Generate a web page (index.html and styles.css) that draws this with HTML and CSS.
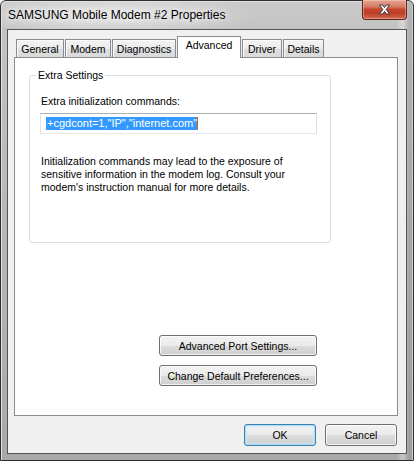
FILE: index.html
```html
<!DOCTYPE html>
<html>
<head>
<meta charset="utf-8">
<title>SAMSUNG Mobile Modem #2 Properties</title>
<link rel="stylesheet" href="styles.css">
</head>
<body>
<div class="window">
  <div class="titlebar">
    <span class="title">SAMSUNG Mobile Modem #2 Properties</span>
    <button class="close" aria-label="Close">
      <svg width="13" height="11" viewBox="0 0 13 11">
        <path d="M1.5 1 H4.5 L6.5 3.6 L8.5 1 H11.5 L8.2 5.5 L11.5 10 H8.5 L6.5 7.4 L4.5 10 H1.5 L4.8 5.5 Z" fill="#fff" stroke="#3a3a3a" stroke-width="1" stroke-linejoin="round"/>
      </svg>
    </button>
  </div>
  <div class="client">
    <div class="tabs">
      <div class="tab w-general">General</div>
      <div class="tab w-modem">Modem</div>
      <div class="tab w-diag">Diagnostics</div>
      <div class="tab tab-active w-adv">Advanced</div>
      <div class="tab w-driver">Driver</div>
      <div class="tab w-details">Details</div>
    </div>
    <div class="panel">
      <fieldset class="group">
        <legend class="group-title">Extra Settings</legend>
        <div class="label">Extra initialization commands:</div>
        <div class="textbox"><span class="sel">+cgdcont=1,"IP","internet.com"</span><span class="caret"></span></div>
        <p class="note">Initialization commands may lead to the exposure of<br>sensitive information in the modem log. Consult your<br>modem's instruction manual for more details.</p>
      </fieldset>
      <div class="panel-buttons">
        <button class="btn btn-wide">Advanced Port Settings...</button>
        <button class="btn btn-wide">Change Default Preferences...</button>
      </div>
    </div>
    <div class="footer">
      <button class="btn btn-small btn-default">OK</button>
      <button class="btn btn-small">Cancel</button>
    </div>
  </div>
</div>
</body>
</html>
```
FILE: styles.css
```css
html, body {
  margin: 0;
  padding: 0;
  width: 414px;
  height: 461px;
  overflow: hidden;
  background: #ffffff;
  font-family: "Liberation Sans", Arial, sans-serif;
  font-size: 10.5px;
  color: #000;
}

.window {
  box-sizing: border-box;
  width: 414px;
  height: 461px;
  border: 1px solid #2e2e2e;
  border-radius: 6px 6px 0 0;
  background:
    radial-gradient(ellipse 150px 22px at 110px 14px, rgba(235,235,235,0.9), rgba(235,235,235,0) 100%),
    linear-gradient(to right, rgba(255,255,255,0) 96%, rgba(255,255,255,0.35) 97.5%, rgba(120,120,120,0.25) 99%),
    linear-gradient(to bottom, #c9c9c9 0, #c3c3c3 30px, #b4b4b4 60%, #a9a9a9 100%);
  box-shadow: inset 1px 1px 0 #e2e2e2, inset -1px 0 0 #d0d0d0;
  padding: 0 6px 6px 6px;
  display: flex;
  flex-direction: column;
}

.titlebar {
  height: 28px;
  display: flex;
  justify-content: space-between;
  align-items: flex-start;
}

.title {
  margin-left: 1px;
  margin-top: 7px;
  font-size: 12px;
  line-height: 15px;
  color: #000;
  text-shadow: 0 0 6px rgba(255,255,255,0.9), 0 0 10px rgba(255,255,255,0.7);
}

.close {
  margin: -1px 0 0 0;
  width: 45px;
  height: 20px;
  padding: 0;
  border: 1px solid #5d2318;
  border-top: none;
  border-radius: 0 0 4px 4px;
  background: linear-gradient(to bottom, #e3a594 0, #d57b65 35%, #c3442c 50%, #be3f27 70%, #d16b52 100%);
  box-shadow: inset 0 0 0 1px rgba(255,210,195,0.45);
  display: flex;
  align-items: center;
  justify-content: center;
}

.close svg {
  display: block;
  margin-top: -1px;
}

.client {
  flex: 1;
  border: 1px solid #555;
  background: #f0f0f0;
  padding: 7px 8px 7px 6px;
  display: flex;
  flex-direction: column;
}

.tabs {
  display: flex;
  align-items: flex-end;
  gap: 1px;
  height: 20px;
  margin-left: 2px;
  position: relative;
  z-index: 1;
}

.tab {
  box-sizing: border-box;
  height: 18px;
  border: 1px solid #898c95;
  border-bottom: none;
  background: linear-gradient(to bottom, #f3f3f3 0, #ebebeb 50%, #dedede 51%, #dadada 100%);
  box-shadow: inset 1px 1px 0 #fbfbfb;
  text-align: center;
  line-height: 17px;
  padding-top: 1px;
  white-space: nowrap;
}

.tab-active {
  height: 22px;
  margin-bottom: -1px;
  background: #fff;
  box-shadow: none;
  line-height: 17px;
  padding-top: 0;
  padding-bottom: 4px;
}

.w-general { width: 48px; }
.w-modem { width: 46px; }
.w-diag { width: 64px; }
.w-adv { width: 64px; }
.w-driver { width: 40px; }
.w-details { width: 41px; }

.panel {
  box-sizing: border-box;
  height: 359px;
  border: 1px solid #898c95;
  background: #fff;
  padding: 11px 0 0 14px;
  display: flex;
  flex-direction: column;
  align-items: flex-start;
}

.group {
  box-sizing: border-box;
  width: 302px;
  margin: 0;
  min-width: 0;
  border: 1px solid #d5dfe5;
  border-radius: 3px;
  padding: 13px 10px 48px 11px;
}

.group-title {
  margin-left: -5px;
  padding: 0 2px;
  line-height: 13px;
}

.label {
  line-height: 13px;
}

.textbox {
  box-sizing: border-box;
  width: 277px;
  height: 21px;
  margin: 5px 0 0 -1px;
  border: 1px solid #abadb3;
  border-color: #abadb3 #dbdfe6 #e3e9ef #e2e3ea;
  background: #fff;
  padding: 3px 0 0 5px;
  display: flex;
  align-items: flex-start;
}

.sel {
  display: inline-block;
  background: #3399ff;
  color: #fff;
  font-size: 11px;
  line-height: 13px;
  height: 13px;
  padding: 0 0 0 1px;
  white-space: nowrap;
}

.caret {
  display: inline-block;
  width: 1px;
  height: 13px;
  background: #cc6600;
}

.note {
  margin: 21px 0 0 0;
  line-height: 13px;
}

.panel-buttons {
  margin: 92px 0 0 130px;
  display: flex;
  flex-direction: column;
  gap: 9px;
}

.btn {
  box-sizing: border-box;
  font-family: "Liberation Sans", Arial, sans-serif;
  font-size: 10.5px;
  color: #000;
  border: 1px solid #707070;
  border-radius: 3px;
  background: linear-gradient(to bottom, #f2f2f2 0, #ebebeb 50%, #dddddd 51%, #cfcfcf 100%);
  box-shadow: inset 0 0 0 1px rgba(255,255,255,0.75);
  padding: 0;
  text-align: center;
  line-height: 18px;
}

.btn-wide {
  width: 158px;
  height: 21px;
}

.footer {
  margin-top: 8px;
  display: flex;
  justify-content: flex-end;
  gap: 9px;
  padding-right: 1px;
}

.btn-small {
  width: 72px;
  height: 22px;
}

.btn-default {
  border-color: #3c7fb1;
  background: linear-gradient(to bottom, #f2f2f2 0, #ebebeb 50%, #dddddd 51%, #cfcfcf 100%);
  box-shadow: inset 0 0 0 1px #a9dcf5, inset 0 0 2px 2px rgba(200,235,252,0.6);
}
```
